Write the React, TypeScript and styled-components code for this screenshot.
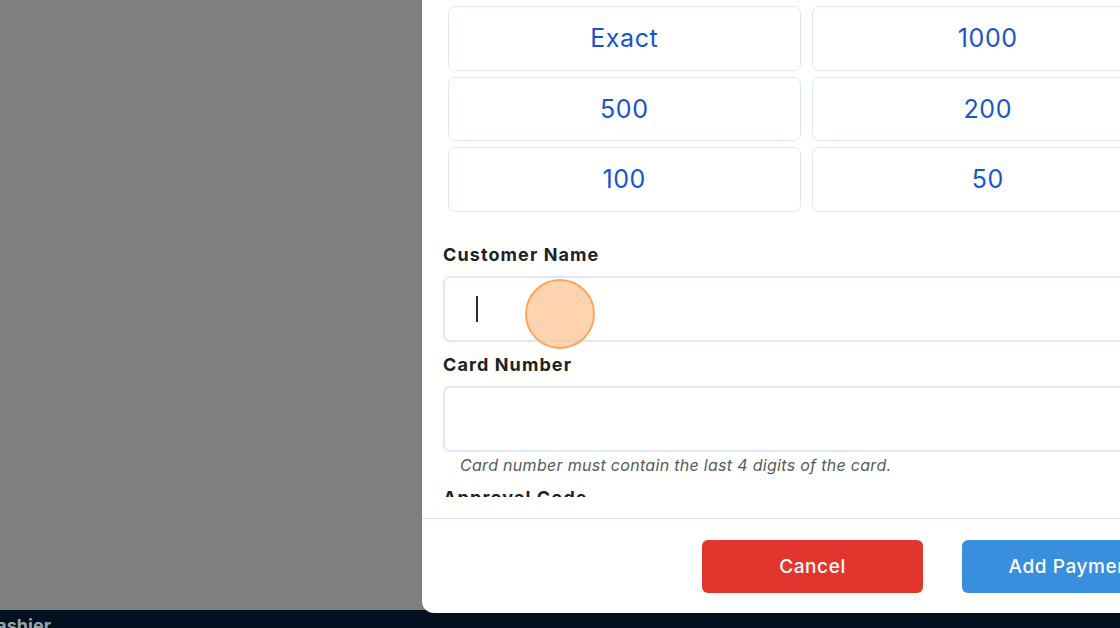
import * as React from 'react';
import styled, { createGlobalStyle } from 'styled-components';

const GlobalStyle = createGlobalStyle`
  html, body {
    margin: 0;
    padding: 0;
    background: #7f7f7f;
  }
  body {
    font-family: Inter, "Open Sans", Arial, sans-serif;
  }
  * {
    box-sizing: border-box;
  }
`;

const SPage = styled.div`
  width: 1120px;
  height: 628px;
  overflow: hidden;
  display: flex;
  flex-direction: column;
`;

const SBackdrop = styled.div`
  height: 610px;
  flex-shrink: 0;
  background: #7f7f7f;
`;

const SBottomBar = styled.div`
  flex: 1;
  background: #01111f;
  padding-top: 5px;
  overflow: hidden;
`;

const SBarLabel = styled.span`
  display: block;
  margin-left: -17px;
  font-size: 18px;
  font-weight: 700;
  color: #9aa3ad;
  line-height: 22px;
`;

const SModal = styled.div`
  position: relative;
  z-index: 1;
  margin-left: 422px;
  width: 768px;
  height: 613px;
  background: #ffffff;
  border-radius: 0 0 12px 12px;
  display: flex;
  flex-direction: column;
`;

const SBody = styled.div`
  flex: 1;
  min-height: 0;
  padding: 0 21px 21px;
  display: flex;
  flex-direction: column;
`;

const SScroll = styled.div`
  flex: 1;
  min-height: 0;
  overflow: hidden;
  padding-top: 6px;
`;

const SAmountGrid = styled.div`
  display: grid;
  grid-template-columns: 1fr 1fr;
  grid-auto-rows: 64.5px;
  gap: 6px 11px;
  margin: 0 5px;
`;

const SAmountButton = styled.button`
  border: 1.5px solid #dce8fa;
  border-radius: 7px;
  background: #ffffff;
  color: #1a55c8;
  font-family: Inter, "Open Sans", Arial, sans-serif;
  font-size: 25px;
  font-weight: 400;
  letter-spacing: 0.6px;
  cursor: pointer;
`;

const SField = styled.div<{ first?: boolean }>`
  margin-top: ${({ first }) => (first ? '30px' : '10px')};
`;

const SLabel = styled.label`
  display: block;
  font-size: 18px;
  font-weight: 700;
  color: #1e1f24;
  line-height: 26px;
  letter-spacing: 1.1px;
  margin-bottom: 8px;
`;

const SInputWrap = styled.div`
  position: relative;
`;

const SInput = styled.div`
  height: 66px;
  border: 2px solid #dde8f8;
  border-radius: 7px;
  background: #ffffff;
  display: flex;
  align-items: center;
  padding-left: 31px;
`;

const SCaret = styled.span`
  display: block;
  width: 1.5px;
  height: 26px;
  background: #2a2a2a;
`;

const SClickMarker = styled.span`
  position: absolute;
  left: 82px;
  top: 3px;
  width: 70px;
  height: 70px;
  border-radius: 50%;
  background: rgba(255, 196, 150, 0.75);
  border: 2px solid #f8a75d;
  pointer-events: none;
`;

const SHint = styled.p`
  margin: 3px 0 0 17px;
  font-size: 16px;
  font-style: italic;
  color: #555a60;
  line-height: 20px;
  letter-spacing: 0.3px;
`;

const SFooter = styled.div`
  border-top: 1.5px solid #d3e4f5;
  padding: 21px 7px 20px;
  display: flex;
  justify-content: flex-end;
  gap: 39px;
`;

const SActionButton = styled.button<{ variant: 'cancel' | 'primary' }>`
  width: 221px;
  height: 53px;
  border: none;
  border-radius: 6px;
  background: ${({ variant }) => (variant === 'cancel' ? '#e1352e' : '#398fdd')};
  color: #ffffff;
  font-family: Inter, "Open Sans", Arial, sans-serif;
  font-size: 19px;
  font-weight: 500;
  letter-spacing: 0.6px;
  cursor: pointer;
  white-space: nowrap;
`;

const amounts = ['Exact', '1000', '500', '200', '100', '50'];

const App = () => (
  <>
    <GlobalStyle />
    <SPage>
      <SBackdrop>
        <SModal>
          <SBody>
            <SScroll>
              <SAmountGrid>
                {amounts.map((a) => (
                  <SAmountButton key={a}>{a}</SAmountButton>
                ))}
              </SAmountGrid>
              <SField first>
                <SLabel>Customer Name</SLabel>
                <SInputWrap>
                  <SInput>
                    <SCaret />
                  </SInput>
                  <SClickMarker />
                </SInputWrap>
              </SField>
              <SField>
                <SLabel>Card Number</SLabel>
                <SInput />
                <SHint>Card number must contain the last 4 digits of the card.</SHint>
              </SField>
              <SField>
                <SLabel>Approval Code</SLabel>
                <SInput />
              </SField>
            </SScroll>
          </SBody>
          <SFooter>
            <SActionButton variant="cancel">Cancel</SActionButton>
            <SActionButton variant="primary">Add Payment</SActionButton>
          </SFooter>
        </SModal>
      </SBackdrop>
      <SBottomBar>
        <SBarLabel>Cashier</SBarLabel>
      </SBottomBar>
    </SPage>
  </>
);

export default App;
